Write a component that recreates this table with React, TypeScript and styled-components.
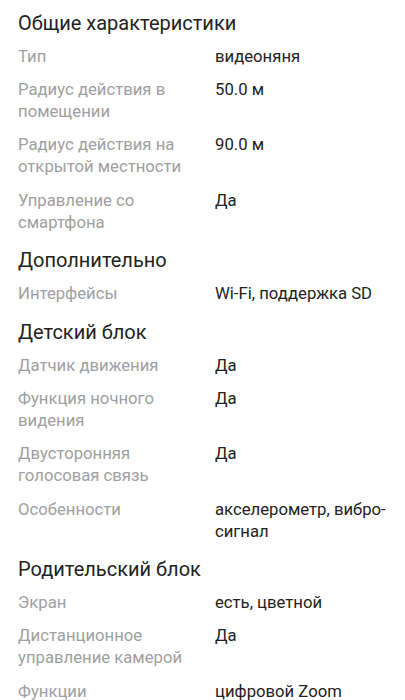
import React from "react";
import styled, { createGlobalStyle } from "styled-components";

type Spec = { label: string; value: string };
type Group = { title: string; items: Spec[] };

const groups: Group[] = [
  {
    title: "Общие характеристики",
    items: [
      { label: "Тип", value: "видеоняня" },
      { label: "Радиус действия в помещении", value: "50.0 м" },
      { label: "Радиус действия на открытой местности", value: "90.0 м" },
      { label: "Управление со смартфона", value: "Да" },
    ],
  },
  {
    title: "Дополнительно",
    items: [{ label: "Интерфейсы", value: "Wi-Fi, поддержка SD" }],
  },
  {
    title: "Детский блок",
    items: [
      { label: "Датчик движения", value: "Да" },
      { label: "Функция ночного видения", value: "Да" },
      { label: "Двусторонняя голосовая связь", value: "Да" },
      { label: "Особенности", value: "акселерометр, вибро-сигнал" },
    ],
  },
  {
    title: "Родительский блок",
    items: [
      { label: "Экран", value: "есть, цветной" },
      { label: "Дистанционное управление камерой", value: "Да" },
      { label: "Функции", value: "цифровой Zoom" },
    ],
  },
];

const GlobalStyle = createGlobalStyle`
  body {
    margin: 0;
    background: #ffffff;
    font-family: Roboto, "Noto Sans", sans-serif;
  }
`;

const Page = styled.div`
  padding: 2px 0 0 18px;
`;

const Section = styled.section`
  display: flex;
  flex-direction: column;
`;

const SectionTitle = styled.h2`
  margin: 0;
  padding: 7.75px 0 4.5px;
  font-size: 20px;
  line-height: 26px;
  font-weight: 400;
  color: #222222;
`;

const Row = styled.div`
  display: grid;
  grid-template-columns: 197px 1fr;
  padding: 5.65px 0;
  font-size: 16.7px;
  line-height: 22px;
`;

const Label = styled.span`
  color: #a0a0a0;
  padding-right: 14px;
`;

const Value = styled.span`
  color: #222222;
  padding-right: 10px;
`;

export default function App() {
  return (
    <>
      <GlobalStyle />
      <Page>
        {groups.map((g) => (
          <Section key={g.title}>
            <SectionTitle>{g.title}</SectionTitle>
            {g.items.map((it) => (
              <Row key={it.label}>
                <Label>{it.label}</Label>
                <Value>{it.value}</Value>
              </Row>
            ))}
          </Section>
        ))}
      </Page>
    </>
  );
}
